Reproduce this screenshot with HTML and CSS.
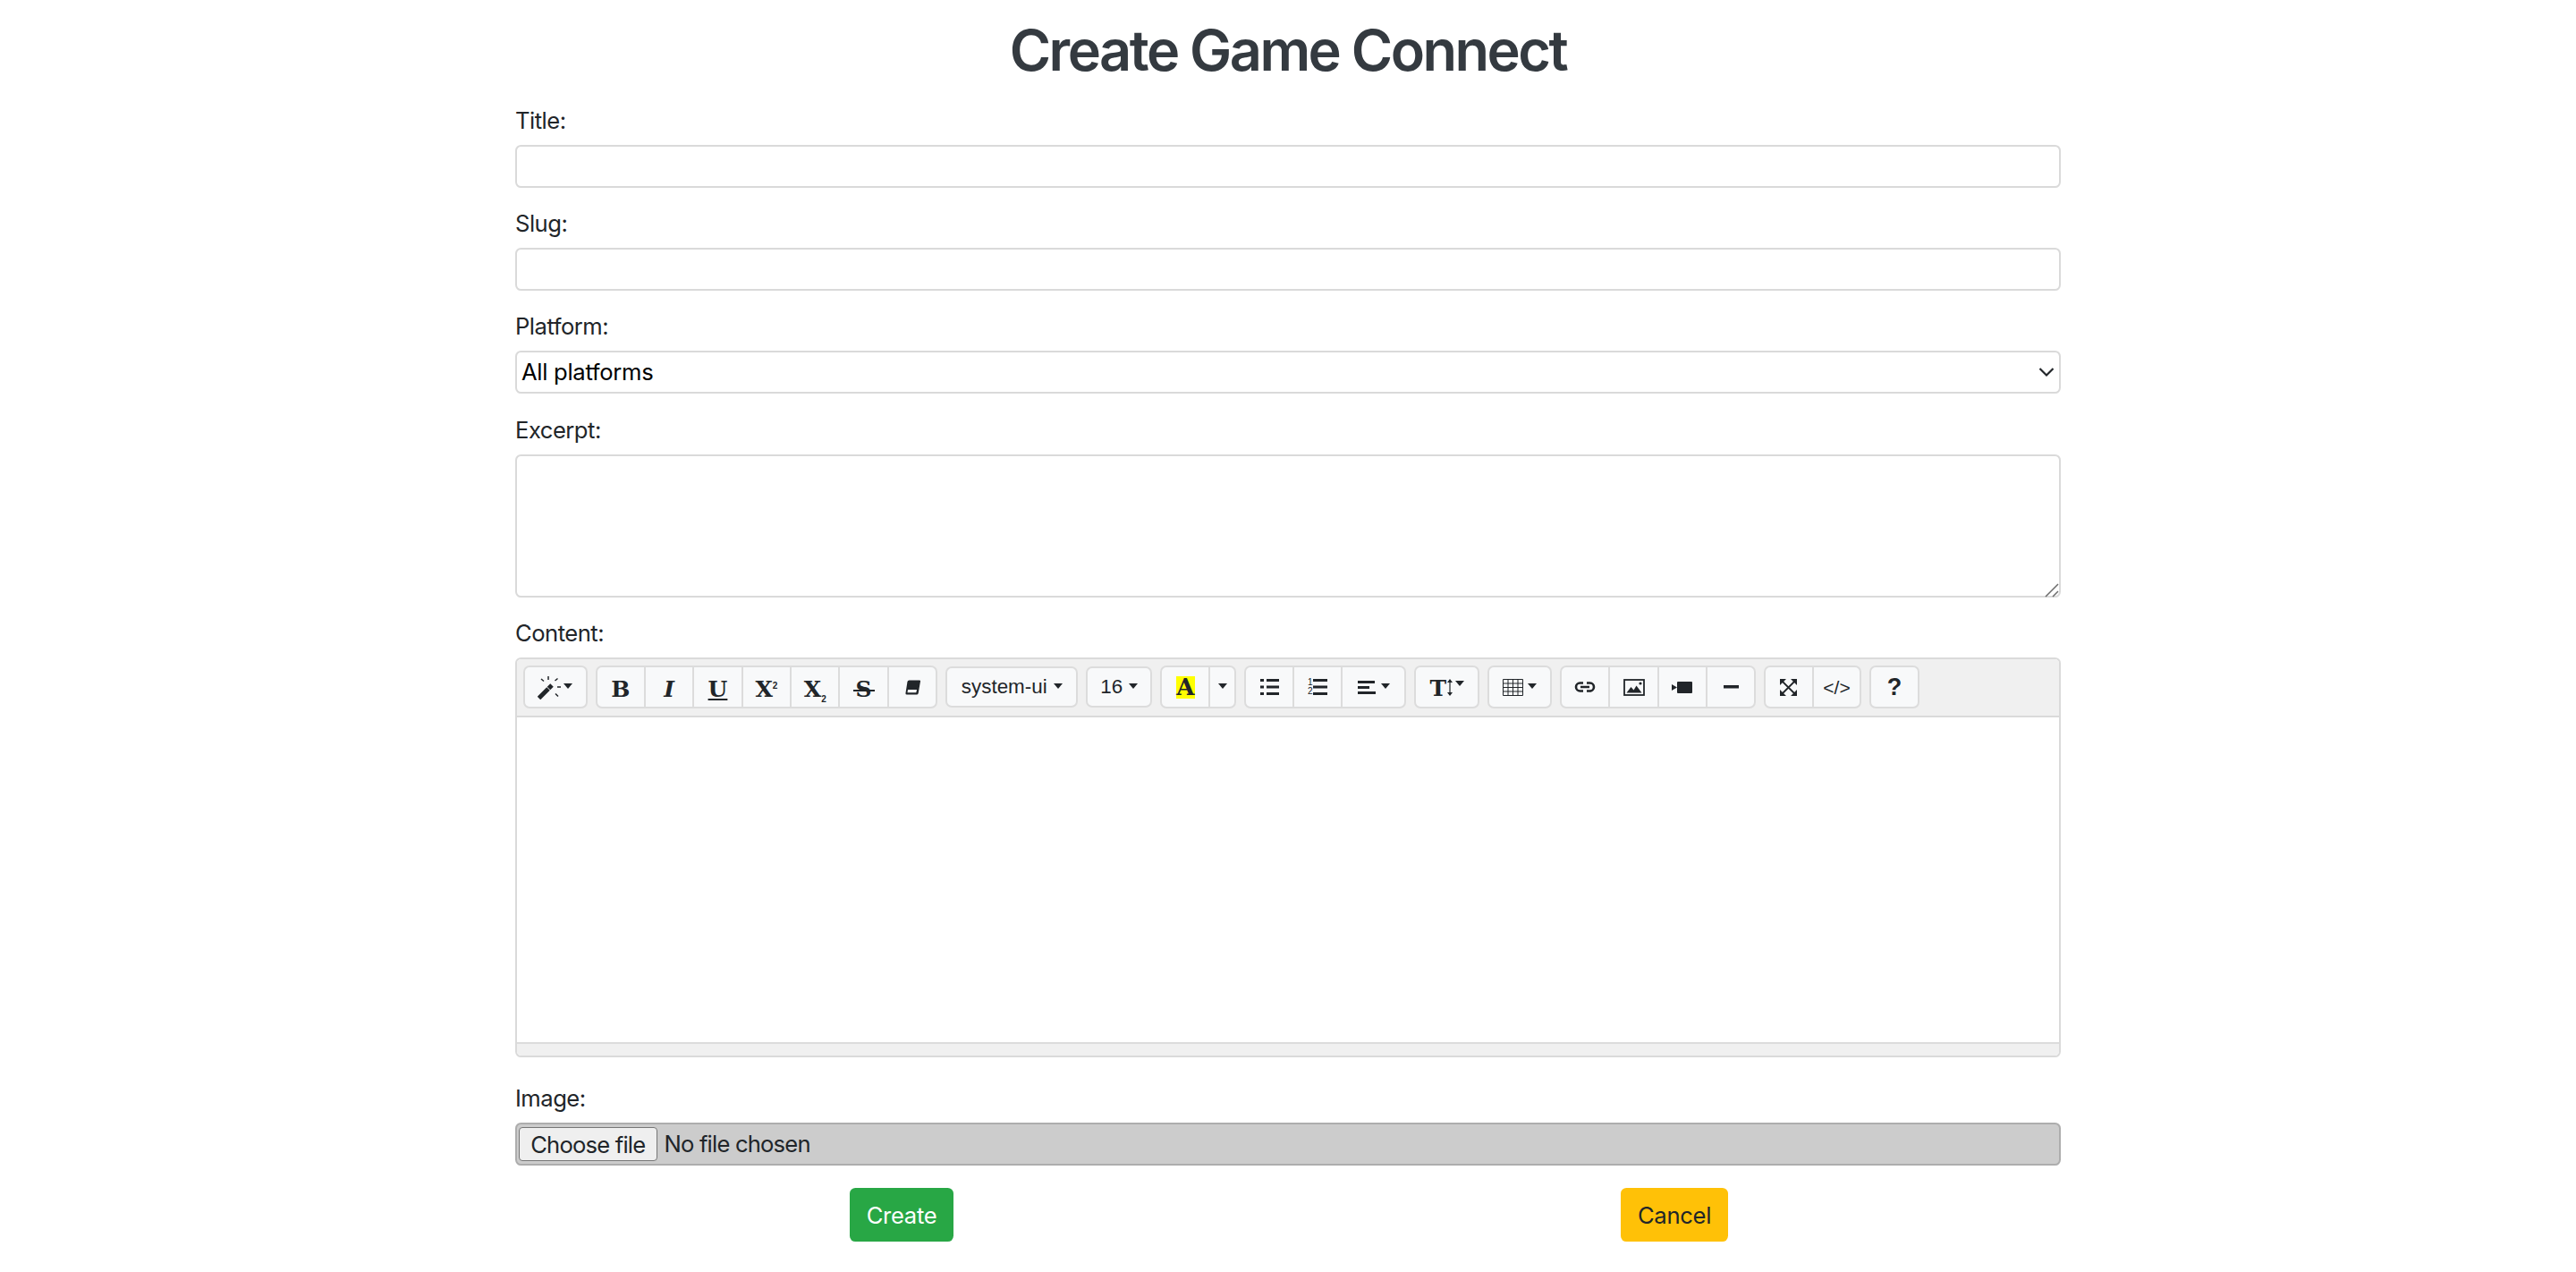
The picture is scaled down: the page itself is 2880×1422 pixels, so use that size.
FILE: index.html
```html
<!DOCTYPE html>
<html lang="en">
<head>
<meta charset="utf-8">
<title>Create Game Connect</title>
<link rel="stylesheet" href="styles.css">
</head>
<body>
<main class="page">
  <h1 class="heading">Create Game Connect</h1>
  <form class="form">
    <div class="field">
      <label class="label">Title:</label>
      <input class="control" type="text">
    </div>
    <div class="field">
      <label class="label">Slug:</label>
      <input class="control" type="text">
    </div>
    <div class="field field-select">
      <label class="label">Platform:</label>
      <select class="control select"><option>All platforms</option></select>
    </div>
    <div class="field">
      <label class="label">Excerpt:</label>
      <div class="area-wrap">
        <textarea class="control area"></textarea>
        <svg class="grip" width="16" height="16" viewBox="0 0 16 16" fill="none" stroke="#6b6b6b" stroke-width="1.500"><path d="M1 15 15 1M9 15l6-6"/></svg>
      </div>
    </div>
    <div class="field field-editor">
      <label class="label">Content:</label>
      <div class="editor">
        <div class="toolbar">
          <div class="group"><div class="tb w-magic">
            <svg class="ico" width="27" height="28" viewBox="0 0 27 28"><path d="M1.500 26.500 12 16" stroke="#212529" stroke-width="5" fill="none"/><path d="M12.500 15.500l3.500-3.500" stroke="#212529" stroke-width="5" fill="none"/><path d="M12 2v4M4 5l3 2.500M19.500 7l3-2.500M22 14h4M20 21.500l3 3" stroke="#212529" stroke-width="1.500" fill="none"/></svg>
            <span class="caret"></span></div></div>
          <div class="group">
            <div class="tb w-b"><span class="glyph">B</span></div>
            <div class="tb w-b"><span class="glyph ital">I</span></div>
            <div class="tb w-b"><span class="glyph under">U</span></div>
            <div class="tb w-b"><span class="glyph">X<sup class="tiny">2</sup></span></div>
            <div class="tb w-b"><span class="glyph">X<sub class="tiny">2</sub></span></div>
            <div class="tb w-b"><span class="glyph strike">S</span></div>
            <div class="tb w-b"><svg width="17" height="17" viewBox="0 0 17 17"><path d="M4.500 .5H16a1 1 0 0 1 1 1.200L14.700 15a2 2 0 0 1-2 1.500H2a1.500 1.500 0 0 1-1.500-1.800L2.500 2a2 2 0 0 1 2-1.500z" fill="#212529"/><path d="M3 11h10l-.7 3.300H2.500z" fill="#f8f9fa"/></svg></div>
          </div>
          <div class="group short"><div class="tb w-font"><span class="tb-text">system-ui</span><span class="caret"></span></div></div>
          <div class="group short"><div class="tb w-size"><span class="tb-text">16</span><span class="caret"></span></div></div>
          <div class="group">
            <div class="tb w-color"><span class="color-a">A</span></div>
            <div class="tb w-more"><span class="caret"></span></div>
          </div>
          <div class="group">
            <div class="tb w-list"><svg width="21" height="18" viewBox="0 0 21 18" fill="#212529"><rect width="4" height="3"/><rect y="7.500" width="4" height="3"/><rect y="15" width="4" height="3"/><rect x="7" width="14" height="3"/><rect x="7" y="7.500" width="14" height="3"/><rect x="7" y="15" width="14" height="3"/></svg></div>
            <div class="tb w-list"><svg class="ol" width="22" height="22" viewBox="0 0 22 22" fill="#212529"><text x="0" y="8" class="svg-num">1</text><text x="0" y="18" class="svg-num">2</text><rect x="6" y="1" width="16" height="3"/><rect x="6" y="8.500" width="16" height="3"/><rect x="6" y="16" width="16" height="3"/></svg></div>
            <div class="tb w-align"><svg width="20" height="15" viewBox="0 0 20 15" fill="#212529"><rect width="19" height="3"/><rect y="6" width="13" height="3"/><rect y="12" width="20" height="3"/></svg><span class="caret"></span></div>
          </div>
          <div class="group"><div class="tb w-height"><span class="glyph tee">T</span><svg width="6" height="19" viewBox="0 0 6 19"><path d="M3 1v17" stroke="#212529" stroke-width="1.200"/><path d="M0 4l3-4 3 4zM0 15l3 4 3-4z" fill="#212529"/></svg><span class="caret caret-tight"></span></div></div>
          <div class="group"><div class="tb w-table"><svg width="23" height="19" viewBox="0 0 23 19" fill="none" stroke="#212529"><path d="M.5.500h22v18H.5zM6 .500v18M11.500.500v18M17 .500v18M.5 5h22M.5 9.500h22M.5 14h22"/></svg><span class="caret"></span></div></div>
          <div class="group">
            <div class="tb w-ins"><svg width="24" height="12" viewBox="0 0 24 12" fill="none" stroke="#212529" stroke-width="2.600"><path d="M10 1.500H6.500a4.500 4.500 0 0 0 0 9H10M14 1.500h3.500a4.500 4.500 0 0 1 0 9H14M7 6h10"/></svg></div>
            <div class="tb w-ins"><svg width="24" height="19" viewBox="0 0 24 19"><rect x="1" y="1" width="22" height="17" fill="none" stroke="#212529" stroke-width="1.800"/><path d="M3.500 15.500 8.500 9l3 3.500 3-5 6 8z" fill="#212529"/><circle cx="19" cy="5" r="1.600" fill="#212529"/></svg></div>
            <div class="tb w-ins"><svg width="23" height="13" viewBox="0 0 23 13" fill="#212529"><rect x="6" width="17" height="13" rx="1"/><path d="M0 3 6 6.500 0 10z"/></svg></div>
            <div class="tb w-ins"><svg width="17" height="4" viewBox="0 0 17 4"><rect width="17" height="3.500" fill="#212529"/></svg></div>
          </div>
          <div class="group">
            <div class="tb w-view"><svg width="19" height="19" viewBox="0 0 19 19"><path d="M3 3l13 13M16 3 3 16" stroke="#212529" stroke-width="1.800"/><path d="M0 0h7L0 7zM19 0h-7l7 7zM0 19h7l-7-7zM19 19h-7l7-7z" fill="#212529"/></svg></div>
            <div class="tb w-view"><span class="code">&lt;/&gt;</span></div>
          </div>
          <div class="group"><div class="tb w-help"><span class="help">?</span></div></div>
        </div>
        <div class="editable"></div>
        <div class="statusbar"></div>
      </div>
    </div>
    <div class="field">
      <label class="label">Image:</label>
      <div class="file">
        <button class="file-btn" type="button">Choose file</button>
        <span class="file-name">No file chosen</span>
      </div>
    </div>
    <div class="actions">
      <button class="btn btn-create" type="button">Create</button>
      <button class="btn btn-cancel" type="button">Cancel</button>
    </div>
  </form>
</main>
</body>
</html>
```
FILE: styles.css
```css
* { box-sizing: border-box; }
html, body { margin: 0; padding: 0; background: #fff; }
body {
  font-family: Inter, "Liberation Sans", sans-serif;
  font-size: 25.6px;
  line-height: 1.5;
  color: #212529;
}
.page { width: 1728px; margin: 0 auto; padding-top: 18px; }
.heading {
  margin: 0 0 20px;
  font-size: 63px;
  font-weight: 600;
  line-height: 77px;
  text-align: center;
  color: #343a40;
  letter-spacing: -2.500px;
}
.field { margin-bottom: 20px; }
.field-select { margin-bottom: 21px; }
.field-editor { margin-bottom: 26px; }
.label { display: block; height: 38px; line-height: 40px; margin-bottom: 9px; letter-spacing: -.5px; }
.control {
  display: block;
  width: 100%;
  height: 48px;
  padding: 0 5px;
  border: 2px solid #dadada;
  border-radius: 6.400px;
  background: #fff;
  font: inherit;
  color: #000;
  outline: none;
}
.select {
  appearance: none;
  letter-spacing: -.3px;
  background-image: url("data:image/svg+xml,%3Csvg xmlns='http://www.w3.org/2000/svg' width='18' height='12' viewBox='0 0 18 12'%3E%3Cpath d='M1.500 2 9 9.500 16.500 2' fill='none' stroke='%23212529' stroke-width='2.200'/%3E%3C/svg%3E");
  background-repeat: no-repeat;
  background-position: right 5px center;
}
.area-wrap { position: relative; }
.area { height: 160px; resize: none; }
.grip { position: absolute; right: 2px; bottom: 0; pointer-events: none; }
.editor {
  border: 2px solid #dadada;
  border-radius: 6.400px;
  height: 447px;
  display: flex;
  flex-direction: column;
  overflow: hidden;
}
.toolbar {
  display: flex;
  align-items: center;
  gap: 9px;
  height: 65px;
  padding: 0 6.500px 1px;
  background: #f0f0f0;
  border-bottom: 2px solid #dadada;
  flex: none;
}
.group { display: flex; height: 48px; flex: none; }
.group.short { height: 46px; }
.tb {
  display: flex;
  align-items: center;
  justify-content: center;
  height: 100%;
  background: #f8f9fa;
  border: 2px solid #dcdcdc;
  margin-left: -2px;
  color: #212529;
}
.tb:first-child { margin-left: 0; border-radius: 7px 0 0 7px; }
.tb:last-child { border-top-right-radius: 7px; border-bottom-right-radius: 7px; }
.tb:only-child { border-radius: 7px; }
.w-magic { width: 72px; gap: 2px; }
.w-b { width: 56.400px; }
.w-font { width: 148px; gap: 7px; }
.w-size { width: 74px; gap: 7px; }
.w-color { width: 56px; }
.w-more { width: 31px; }
.w-list { width: 56px; }
.w-align { width: 73px; gap: 6px; }
.w-height { width: 73px; gap: 1px; }
.w-table { width: 72px; gap: 5px; }
.w-ins { width: 56.250px; }
.w-view { width: 55.500px; }
.w-help { width: 55.500px; }
.tb-text { font-family: "Liberation Sans", sans-serif; font-size: 22.400px; line-height: 1; }
.caret {
  display: block;
  width: 0;
  height: 0;
  border-left: 5.500px solid transparent;
  border-right: 5.500px solid transparent;
  border-top: 6px solid #212529;
  margin-bottom: 3px;
}
.caret-tight { margin-left: 2px; margin-bottom: 8px; }
.ico { display: block; }
.ol { position: relative; top: 1px; }
.glyph {
  font-family: "DejaVu Serif", serif;
  font-weight: 700;
  font-size: 25px;
  line-height: 1;
  position: relative;
  top: 2px;
}
.ital { font-style: italic; }
.under { text-decoration: underline; text-decoration-thickness: 2px; text-underline-offset: 2px; }
.strike::after {
  content: "";
  position: absolute;
  left: -3px;
  right: -3px;
  top: 13px;
  height: 2px;
  background: #212529;
}
.tiny { font-size: 10px; line-height: 0; font-family: "Liberation Sans", sans-serif; }
.tee { font-size: 25px; top: 1px; }
.color-a {
  display: block;
  width: 21px;
  height: 25px;
  background: #ff0;
  font-family: "DejaVu Serif", serif;
  font-weight: 700;
  font-size: 26px;
  line-height: 25px;
  text-align: center;
}
.svg-num { font-family: "Liberation Sans", sans-serif; font-size: 10px; }
.code { font-family: "Liberation Sans", sans-serif; font-size: 21px; line-height: 1; }
.help { font-family: "Liberation Sans", sans-serif; font-weight: 700; font-size: 27px; line-height: 1; }
.editable { flex: 1; background: #fff; }
.statusbar { flex: none; height: 15px; background: #f0f0f0; border-top: 2px solid #dcdcdc; }
.file {
  display: flex;
  align-items: center;
  gap: 8px;
  width: 100%;
  height: 48px;
  padding: 0 2px;
  background: #ccc;
  border: 2px solid #adadad;
  border-radius: 6.400px;
  color: #212529;
}
.file-btn {
  width: 154.500px;
  height: 38px;
  padding: 0;
  font: inherit;
  letter-spacing: -.8px;
  background: #efefef;
  border: 1.500px solid #767676;
  border-radius: 4px;
  color: #212529;
}
.file-name { letter-spacing: -.8px; }
.actions { display: grid; grid-template-columns: 1fr 1fr; justify-items: center; margin-top: 25px; }
.btn {
  height: 60px;
  padding: 2px 19px 0;
  border: 0;
  border-radius: 6.400px;
  font: inherit;
  letter-spacing: -.3px;
}
.btn-create { background: #28a745; color: #fff; }
.btn-cancel { background: #ffc107; color: #212529; }
```
